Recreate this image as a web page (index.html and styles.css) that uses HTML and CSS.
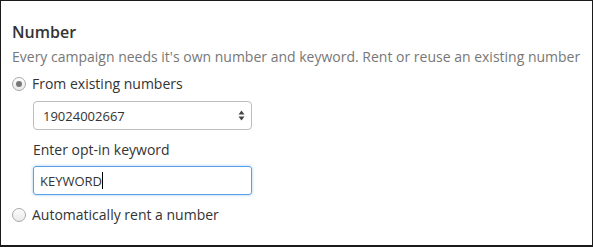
FILE: index.html
```html
<!DOCTYPE html>
<html lang="en">
<head>
    <meta charset="UTF-8">
    <meta name="viewport" content="width=device-width, initial-scale=1.0">
    <title>Number</title>
    <link rel="stylesheet" href="styles.css">
</head>
<body>
    <div class="panel">
        <h3>Number</h3>
        <p class="hint">Every campaign needs it's own number and keyword. Rent or reuse an existing number</p>

        <!-- Existing number option -->
        <label class="radio-row">
            <span class="radio checked"></span>
            From existing numbers
        </label>
        <div class="sub-fields">
            <div class="select-box">
                <span>19024002667</span>
                <svg class="arrows" width="7" height="11" viewBox="0 0 7 11">
                    <path d="M3.5 0.5 L6.5 4.5 L0.5 4.5 Z" fill="#444"/>
                    <path d="M3.5 10.5 L6.5 6.5 L0.5 6.5 Z" fill="#444"/>
                </svg>
            </div>
            <div class="field-label">Enter opt-in keyword</div>
            <div class="text-input">KEYWORD<span class="caret"></span></div>
        </div>

        <!-- Rent option -->
        <label class="radio-row last">
            <span class="radio"></span>
            Automatically rent a number
        </label>
    </div>
</body>
</html>
```

FILE: styles.css
```css
body {
    margin: 0;
    font-family: "Open Sans", "Liberation Sans", sans-serif;
    color: #333;
}
.panel {
    width: 593px;
    height: 247px;
    box-sizing: border-box;
    border: 1px solid #1a1a1a;
    border-bottom-width: 2px;
    padding: 19px 11px 0 11px;
}
.panel h3 {
    margin: 0;
    font-size: 16px;
    font-weight: 600;
    line-height: 24px;
}
.hint {
    margin: 2px 0 0;
    font-size: 14px;
    color: #777;
    line-height: 22px;
}
.radio-row {
    display: flex;
    align-items: center;
    gap: 6px;
    font-size: 14px;
    line-height: 20px;
    margin-top: 6px;
}
.radio {
    width: 14px;
    height: 14px;
    box-sizing: border-box;
    border-radius: 50%;
    border: 1px solid #a9a9a9;
    background: linear-gradient(#fdfdfd, #e9e9e9);
    display: flex;
    align-items: center;
    justify-content: center;
}
.radio.checked::after {
    content: "";
    width: 6px;
    height: 6px;
    border-radius: 50%;
    background: #777;
}
.sub-fields {
    padding-left: 21px;
    padding-top: 7px;
    width: 219px;
}
.select-box {
    height: 29px;
    box-sizing: border-box;
    border: 1px solid #bdbdbd;
    border-radius: 4px;
    display: flex;
    align-items: center;
    justify-content: space-between;
    padding: 0 6px 0 9px;
    font-size: 13px;
}
.field-label {
    font-size: 14px;
    line-height: 20px;
    margin-top: 10px;
}
.text-input {
    margin-top: 6px;
    height: 29px;
    box-sizing: border-box;
    border: 1px solid #5aa0e6;
    border-radius: 3px;
    box-shadow: 0 0 3px rgba(90, 160, 230, 0.6);
    display: flex;
    align-items: center;
    padding-left: 6px;
    font-size: 13px;
    color: #333;
}
.caret {
    width: 1px;
    height: 17px;
    background: #000;
}
.radio-row.last {
    margin-top: 10px;
}
```
